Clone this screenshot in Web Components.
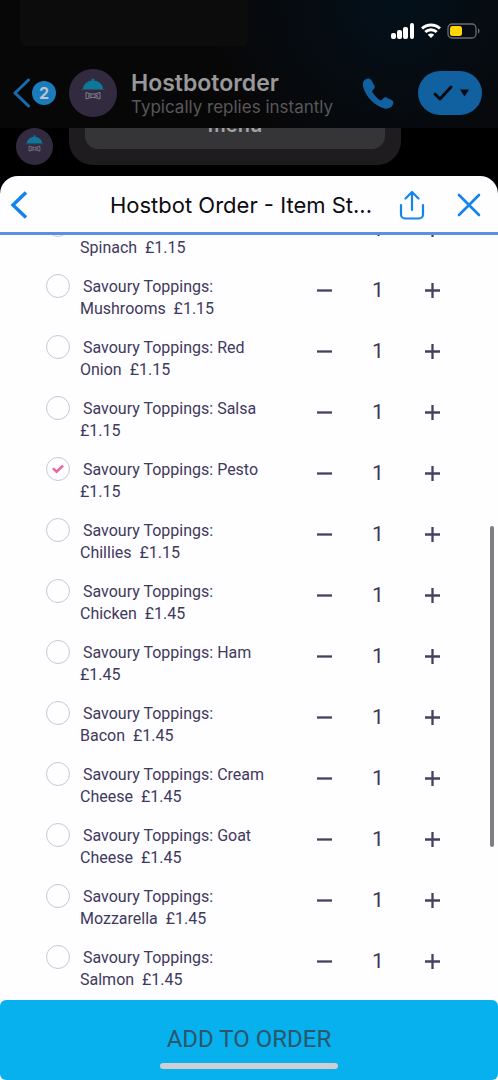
<!DOCTYPE html>
<html lang="en">
<head>
  <meta charset="UTF-8">
  <meta name="viewport" content="width=device-width, initial-scale=1.0">
  <title>Hostbot Order</title>
  <style>
    body {
      margin: 0;
      background-color: #000;
      font-family: Inter, "Liberation Sans", sans-serif;
    }
  </style>
</head>
<body>
  <order-app></order-app>

  <script>
    class StatusBar extends HTMLElement {
      constructor() {
        super();
        this.shadowDOM = this.attachShadow({ mode: 'open' });
      }

      connectedCallback() {
        this.shadowDOM.innerHTML = `
          <style>
            :host {
              display: flex;
              justify-content: space-between;
              height: 58px;
              padding: 0 18px 0 20px;
            }
            .pill {
              width: 228px;
              height: 46px;
              border-radius: 0 0 6px 6px;
              background-color: #0d0c0d;
            }
            .icons {
              display: flex;
              align-items: center;
              gap: 6px;
              height: 62px;
            }
            svg { display: block; }
          </style>
          <div class="pill"></div>
          <div class="icons">
            <svg width="24" height="16" viewBox="0 0 24 16" fill="#fff">
              <rect x="0" y="10" width="5" height="6" rx="2"/>
              <rect x="6" y="7" width="5" height="9" rx="2"/>
              <rect x="12" y="4" width="5" height="12" rx="2"/>
              <rect x="19" y="0" width="4" height="16" rx="2"/>
            </svg>
            <svg width="20" height="16" viewBox="0 0 20 16" fill="none" stroke="#fff" stroke-width="3">
              <path d="M1 5.500a13 13 0 0 1 18 0"/>
              <path d="M4.300 9a8.300 8.300 0 0 1 11.400 0"/>
              <path d="M6.800 11.800a4.600 4.600 0 0 1 6.400 0L10 15z" fill="#fff" stroke="none"/>
            </svg>
            <svg width="33" height="16" viewBox="0 0 33 16">
              <rect x="1" y="1" width="28" height="14" rx="4" fill="none" stroke="#6c6b6e" stroke-width="1.300"/>
              <rect x="3" y="3" width="12" height="10" rx="2.500" fill="#ffd60a"/>
              <path d="M31 5.500c2 .6 2 4.400 0 5z" fill="#6c6b6e"/>
            </svg>
          </div>
        `;
      }
    }

    class BotAvatar extends HTMLElement {
      constructor() {
        super();
        this.shadowDOM = this.attachShadow({ mode: 'open' });
      }

      connectedCallback() {
        this.shadowDOM.innerHTML = `
          <style>
            :host {
              display: block;
              flex: none;
              width: var(--avatar-size, 48px);
              height: var(--avatar-size, 48px);
            }
            svg { display: block; width: 100%; height: 100%; }
          </style>
          <svg viewBox="0 0 48 48">
            <circle cx="24" cy="24" r="24" fill="#322b40"/>
            <circle cx="24" cy="11" r="1.500" fill="#0f7797"/>
            <path d="M14 20a10 8.500 0 0 1 20 0z" fill="#0f7797"/>
            <path d="M12.500 20.500h23" stroke="#2d4f63" stroke-width="1"/>
            <path d="M17 23.500l5 1.500h4l5-1.500v6.500l-5-1.500h-4l-5 1.500zM22 25v3.500M26 25v3.500M19 25.500l2 1.300-2 1.300M29 25.500l-2 1.300 2 1.300" fill="none" stroke="#948e9c" stroke-width=".8"/>
          </svg>
        `;
      }
    }

    class ChatHeader extends HTMLElement {
      constructor() {
        super();
        this.shadowDOM = this.attachShadow({ mode: 'open' });
      }

      connectedCallback() {
        this.shadowDOM.innerHTML = `
          <style>
            :host {
              display: flex;
              align-items: center;
              height: 70px;
              padding: 0 16px 0 12px;
            }
            button {
              display: flex;
              align-items: center;
              padding: 0;
              border: none;
              background: none;
              font-family: inherit;
            }
            .back {
              gap: 1px;
              margin-right: 13px;
            }
            .badge {
              width: 24px;
              border-radius: 50%;
              background-color: #1a7bbd;
              color: #b9c4cc;
              font-size: 16px;
              font-weight: 700;
              line-height: 24px;
              text-align: center;
            }
            .who {
              flex: 1;
              min-width: 0;
              margin-left: 14px;
              padding-top: 2px;
              white-space: nowrap;
            }
            h1 {
              margin: 0;
              color: #99989a;
              font-size: 23px;
              font-weight: 600;
              line-height: 26px;
            }
            p {
              margin: 0;
              color: #58575a;
              font-size: 17px;
              line-height: 22px;
            }
            .done {
              justify-content: center;
              gap: 6px;
              width: 64px;
              height: 44px;
              margin-left: 24px;
              border-radius: 22px;
              background-color: #11609f;
            }
          </style>
          <button class="back" aria-label="Back">
            <svg width="19" height="30" viewBox="0 0 19 30" fill="none" stroke="#166cae" stroke-width="3" stroke-linecap="round" stroke-linejoin="round">
              <path d="M16.500 2L3 15l13.500 13"/>
            </svg>
            <span class="badge">2</span>
          </button>
          <bot-avatar></bot-avatar>
          <div class="who">
            <h1>Hostbotorder</h1>
            <p>Typically replies instantly</p>
          </div>
          <button aria-label="Call">
            <svg width="32" height="31" viewBox="0 0 32 31" fill="#11609f">
              <path d="M4 1C1 2.500.3 6 1.300 9.500 4 19 13 28 22.500 30.500c4 1 8-1.500 8.800-5 .3-1.500-.2-2.500-1.300-3.200l-5-2.600c-1.400-.7-2.600-.4-3.600.6l-1.600 1.600c-.6.6-1.300.6-2 .1-2.700-1.800-5.500-4.700-7.300-7.700-.4-.7-.3-1.400.2-2l1.200-1.300c.9-1 1.100-2.200.4-3.500L9.300 2C8 .2 6 0 4 1z"/>
            </svg>
          </button>
          <button class="done" aria-label="Mark as done">
            <svg width="22" height="18" viewBox="0 0 22 18" fill="none" stroke="#070a10" stroke-width="3" stroke-linecap="round" stroke-linejoin="round">
              <path d="M3 10l5 5L19 3"/>
            </svg>
            <svg width="9" height="8" viewBox="0 0 9 8" fill="#070a10"><path d="M0 0.500h9L4.500 7.500z"/></svg>
          </button>
        `;
      }
    }

    class ChatPeek extends HTMLElement {
      constructor() {
        super();
        this.shadowDOM = this.attachShadow({ mode: 'open' });
      }

      connectedCallback() {
        this.shadowDOM.innerHTML = `
          <style>
            :host {
              display: flex;
              align-items: flex-end;
              gap: 16px;
              height: 37px;
              padding: 0 97px 11px 16px;
              overflow: hidden;
              background-color: #000;
              --avatar-size: 37px;
            }
            .bubble {
              flex: 1;
              padding: 0 16px 16px;
              border-radius: 0 0 24px 24px;
              background-color: #1e1c1f;
            }
            button {
              display: block;
              width: 100%;
              height: 36px;
              padding: 0 0 12px;
              border: none;
              border-radius: 0 0 13px 13px;
              background-color: #353436;
              color: #a3a2a4;
              font-family: inherit;
              font-size: 20px;
              font-weight: 600;
              line-height: 24px;
            }
          </style>
          <bot-avatar></bot-avatar>
          <div class="bubble"><button>menu</button></div>
        `;
      }
    }

    class SheetHeader extends HTMLElement {
      constructor() {
        super();
        this.shadowDOM = this.attachShadow({ mode: 'open' });
      }

      connectedCallback() {
        this.shadowDOM.innerHTML = `
          <style>
            :host {
              display: flex;
              align-items: center;
              height: 56px;
              padding: 0 17px 0 10px;
              border-bottom: 3px solid #5c8fe4;
            }
            button {
              display: block;
              padding: 2px 0 0;
              border: none;
              background: none;
            }
            svg {
              display: block;
              fill: none;
              stroke: #1284ee;
            }
            h2 {
              flex: 1;
              margin: 0 27px 0 0;
              padding-top: 2px;
              color: #0c0c0e;
              font-size: 22px;
              font-weight: 400;
              line-height: 30px;
              text-align: right;
              white-space: nowrap;
            }
            .share { margin-right: 32px; }
          </style>
          <button aria-label="Back">
            <svg width="18" height="28" viewBox="0 0 18 28" stroke-width="3.500"><path d="M16 1.500L3 14l13 12.500"/></svg>
          </button>
          <h2><slot></slot></h2>
          <button class="share" aria-label="Share">
            <svg width="26" height="30" viewBox="0 0 26 30" stroke-width="2.200" stroke-linecap="round" stroke-linejoin="round">
              <path d="M2 15v9.500a4 4 0 0 0 4 4h14a4 4 0 0 0 4-4V15M13 20V2M6.500 8.500L13 2l6.500 6.500"/>
            </svg>
          </button>
          <button aria-label="Close">
            <svg width="24" height="24" viewBox="0 0 24 24" stroke-width="2.600" stroke-linecap="round"><path d="M2 2l20 20M22 2L2 22"/></svg>
          </button>
        `;
      }
    }

    class QuantityStepper extends HTMLElement {
      constructor() {
        super();
        this.shadowDOM = this.attachShadow({ mode: 'open' });
      }

      connectedCallback() {
        this.value = 1;
        this.shadowDOM.innerHTML = `
          <style>
            :host {
              display: flex;
              flex: none;
              height: 32px;
              color: #3d3852;
              font-size: 21px;
            }
            button, output {
              display: flex;
              align-items: center;
              justify-content: center;
              width: 54px;
              padding: 0;
              border: none;
              background: none;
            }
            svg { display: block; stroke: #454060; stroke-width: 2.300; }
          </style>
          <button class="minus" aria-label="Less">
            <svg width="15" height="15" viewBox="0 0 15 15"><path d="M0 7.500h15"/></svg>
          </button>
          <output>1</output>
          <button class="plus" aria-label="More">
            <svg width="15" height="15" viewBox="0 0 15 15"><path d="M0 7.500h15M7.500 0v15"/></svg>
          </button>
        `;
        this.shadowDOM.querySelector('.minus').addEventListener('click', () => this.change(-1));
        this.shadowDOM.querySelector('.plus').addEventListener('click', () => this.change(1));
      }

      change(step) {
        this.value = Math.max(1, this.value + step);
        this.shadowDOM.querySelector('output').textContent = this.value;
      }
    }

    class ToppingRow extends HTMLElement {
      constructor() {
        super();
        this.shadowDOM = this.attachShadow({ mode: 'open' });
      }

      connectedCallback() {
        this.shadowDOM.innerHTML = `
          <style>
            :host {
              display: flex;
              flex: none;
              align-items: flex-start;
              height: 55px;
              padding: 6px 39px 0 46px;
            }
            input {
              appearance: none;
              display: grid;
              place-items: center;
              flex: none;
              box-sizing: border-box;
              width: 24px;
              height: 24px;
              margin: 0 10px 0 0;
              border: 1px solid #c9c8ce;
              border-radius: 50%;
            }
            input:checked::before {
              content: "";
              width: 12px;
              height: 10px;
              background-color: #f0649c;
              clip-path: polygon(0 50%, 16% 34%, 38% 60%, 84% 8%, 100% 24%, 38% 96%);
            }
            label {
              flex: 1;
              padding-top: 2px;
              color: #3f395c;
              font-size: 16px;
              line-height: 22px;
              text-indent: 3px;
              white-space: nowrap;
            }
            label span {
              display: block;
              text-indent: 0;
              white-space: pre;
            }
          </style>
          <input type="checkbox" id="topping">
          <label for="topping"><slot></slot><span><slot name="price"></slot></span></label>
          <quantity-stepper></quantity-stepper>
        `;
        this.shadowDOM.querySelector('input').checked = this.hasAttribute('checked');
      }
    }

    class AddBar extends HTMLElement {
      constructor() {
        super();
        this.shadowDOM = this.attachShadow({ mode: 'open' });
      }

      connectedCallback() {
        this.shadowDOM.innerHTML = `
          <style>
            :host { display: block; position: relative; }
            button {
              display: block;
              width: 100%;
              height: 80px;
              padding: 0 0 2px;
              border: none;
              border-radius: 6px;
              background-color: #06b1ee;
              color: #2c566c;
              font-family: inherit;
              font-size: 24px;
            }
            /* home indicator floats over the button */
            .home {
              position: absolute;
              bottom: 11px;
              left: 50%;
              width: 178px;
              height: 6px;
              margin-left: -89px;
              border-radius: 3px;
              background-color: #cfcfd2;
            }
          </style>
          <button><slot></slot></button>
          <div class="home"></div>
        `;
      }
    }

    const toppings = [
      ['', 'Spinach  £1.15'],
      ['', 'Mushrooms  £1.15'],
      [' Red', 'Onion  £1.15'],
      [' Salsa', '£1.15'],
      [' Pesto', '£1.15', true],
      ['', 'Chillies  £1.15'],
      ['', 'Chicken  £1.45'],
      [' Ham', '£1.45'],
      ['', 'Bacon  £1.45'],
      [' Cream', 'Cheese  £1.45'],
      [' Goat', 'Cheese  £1.45'],
      ['', 'Mozzarella  £1.45'],
      ['', 'Salmon  £1.45'],
    ];

    class OrderApp extends HTMLElement {
      constructor() {
        super();
        this.shadowDOM = this.attachShadow({ mode: 'open' });
      }

      connectedCallback() {
        this.render();
      }

      render() {
        this.shadowDOM.innerHTML = `
          <style>
            :host {
              display: flex;
              flex-direction: column;
              height: 100vh;
            }
            header {
              flex: none;
              background: radial-gradient(circle at 80% 0, #03101a, #080708 45%);
            }
            chat-peek { flex: none; }
            .sheet {
              display: flex;
              flex: 1;
              flex-direction: column;
              min-height: 0;
              border-radius: 18px 18px 0 0;
              background-color: #fefdff;
            }
            sheet-header, add-bar { flex: none; }
            .list {
              position: relative;
              display: flex;
              flex: 1;
              flex-direction: column;
              justify-content: flex-end;
              min-height: 0;
              overflow: hidden;
            }
            .list, add-bar { font-family: Roboto, "Liberation Sans", sans-serif; }
            .thumb {
              position: absolute;
              top: 38%;
              right: 4px;
              bottom: 20%;
              width: 4px;
              border-radius: 2px;
              background-color: #7f7e80;
            }
          </style>
          <header>
            <status-bar></status-bar>
            <chat-header></chat-header>
          </header>
          <chat-peek></chat-peek>
          <section class="sheet">
            <sheet-header>Hostbot Order - Item St...</sheet-header>
            <div class="list">
              ${toppings.map(([name, price, checked]) => `
                <topping-row ${checked ? 'checked' : ''}>Savoury Toppings:${name}<span slot="price">${price}</span></topping-row>
              `).join('')}
              <div class="thumb"></div>
            </div>
            <add-bar>ADD TO ORDER</add-bar>
          </section>
        `;
      }
    }

    customElements.define('status-bar', StatusBar);
    customElements.define('bot-avatar', BotAvatar);
    customElements.define('chat-header', ChatHeader);
    customElements.define('chat-peek', ChatPeek);
    customElements.define('sheet-header', SheetHeader);
    customElements.define('quantity-stepper', QuantityStepper);
    customElements.define('topping-row', ToppingRow);
    customElements.define('add-bar', AddBar);
    customElements.define('order-app', OrderApp);
  </script>
</body>
</html>
